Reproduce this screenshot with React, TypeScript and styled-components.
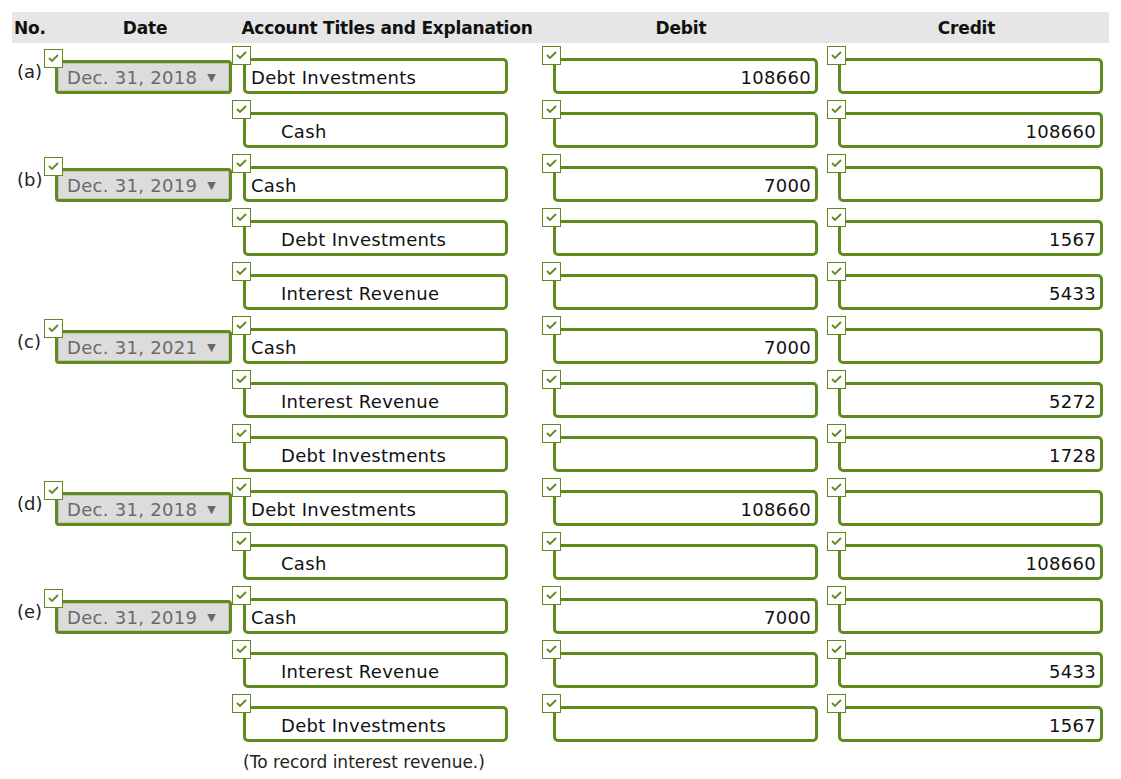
import React from "react";
import styled, { createGlobalStyle } from "styled-components";

const GREEN = "#5e8b1b";

const Global = createGlobalStyle`
  html, body { margin: 0; padding: 0; background: #fff; }
  body { font-family: "DejaVu Sans", Verdana, sans-serif; color: #111; }
`;

const Page = styled.div`
  padding: 12px 12px 0 12px;
  width: 1097px;
`;

const COLS = "32px 188px 310px 285px 282px";

const Header = styled.div`
  display: grid;
  grid-template-columns: ${COLS};
  background: #e6e6e6;
  height: 31px;
  align-items: center;
  font-weight: bold;
  font-size: 17px;
  letter-spacing: -0.2px;
`;

const HeadCell = styled.div<{ $align?: string; $pl?: number; $pr?: number }>`
  text-align: ${(p) => p.$align || "center"};
  padding-left: ${(p) => p.$pl || 0}px;
  padding-right: ${(p) => p.$pr || 0}px;
  white-space: nowrap;
`;

const Body = styled.div`
  padding-top: 3px;
`;

const Row = styled.div`
  display: grid;
  grid-template-columns: ${COLS};
  height: 54px;
`;

const Label = styled.div`
  font-size: 18px;
  line-height: 22px;
  padding: 15px 0 0 5px;
  color: #222;
`;

const Field = styled.div<{ $top?: number }>`
  position: relative;
  padding: ${(p) => (p.$top ?? 12)}px 0 0 11px;
`;

const Check = styled.span<{ $top?: number }>`
  position: absolute;
  left: 0;
  top: ${(p) => p.$top ?? 0}px;
  width: 17px;
  height: 17px;
  border: 1.5px solid ${GREEN};
  background: #fff;
  z-index: 2;
  display: flex;
  align-items: flex-start;
  justify-content: center;
`;

const Input = styled.div<{ $right?: boolean; $indent?: boolean }>`
  box-sizing: border-box;
  width: 265px;
  height: 36px;
  border: 3px solid ${GREEN};
  border-radius: 5px;
  background: #fff;
  font-size: 18px;
  line-height: 34px;
  padding: 0 ${(p) => (p.$right ? 4 : 0)}px 0 ${(p) => (p.$indent ? 35 : 5)}px;
  text-align: ${(p) => (p.$right ? "right" : "left")};
  white-space: nowrap;
  letter-spacing: 0.3px;
  overflow: visible;
`;

const Select = styled.div`
  box-sizing: border-box;
  width: 177px;
  height: 34px;
  border: 3px solid ${GREEN};
  border-radius: 4px;
  background: #dcdcdc;
  box-shadow: inset 0 0 0 1px #c4c4c4;
  color: #6a6a6a;
  font-size: 18px;
  line-height: 28px;
  padding: 1px 0 0 9px;
  display: flex;
  align-items: center;
  white-space: nowrap;
  letter-spacing: 0.3px;
`;

const Arrow = styled.span`
  font-size: 11px;
  margin-left: 10px;
  color: #666;
`;

const Note = styled.div`
  padding: 4px 0 0 231px;
  font-size: 17px;
  color: #222;
`;

const Tick = () => (
  <svg width="11" height="8" viewBox="0 0 11 8" style={{ marginTop: 4 }}>
    <path d="M1 4 L4 7 L10 1" fill="none" stroke={GREEN} strokeWidth="1.8" />
  </svg>
);

type Entry = {
  label?: string;
  date?: string;
  account: string;
  indent?: boolean;
  debit?: string;
  credit?: string;
};

const rows: Entry[] = [
  { label: "(a)", date: "Dec. 31, 2018", account: "Debt Investments", debit: "108660" },
  { account: "Cash", indent: true, credit: "108660" },
  { label: "(b)", date: "Dec. 31, 2019", account: "Cash", debit: "7000" },
  { account: "Debt Investments", indent: true, credit: "1567" },
  { account: "Interest Revenue", indent: true, credit: "5433" },
  { label: "(c)", date: "Dec. 31, 2021", account: "Cash", debit: "7000" },
  { account: "Interest Revenue", indent: true, credit: "5272" },
  { account: "Debt Investments", indent: true, credit: "1728" },
  { label: "(d)", date: "Dec. 31, 2018", account: "Debt Investments", debit: "108660" },
  { account: "Cash", indent: true, credit: "108660" },
  { label: "(e)", date: "Dec. 31, 2019", account: "Cash", debit: "7000" },
  { account: "Interest Revenue", indent: true, credit: "5433" },
  { account: "Debt Investments", indent: true, credit: "1567" },
];

export default function App() {
  return (
    <Page>
      <Global />
      <Header>
        <HeadCell $align="left" $pl={2}>No.</HeadCell>
        <HeadCell $pl={14}>Date</HeadCell>
        <HeadCell>Account Titles and Explanation</HeadCell>
        <HeadCell $pr={7}>Debit</HeadCell>
        <HeadCell $pr={3}>Credit</HeadCell>
      </Header>
      <Body>
        {rows.map((r, i) => (
          <Row key={i}>
            <Label>{r.label || ""}</Label>
            <div>
              {r.date && (
                <Field $top={14}>
                  <Check $top={3}>
                    <Tick />
                  </Check>
                  <Select>
                    {r.date}
                    <Arrow>▼</Arrow>
                  </Select>
                </Field>
              )}
            </div>
            <Field>
              <Check>
                <Tick />
              </Check>
              <Input $indent={r.indent}>{r.account}</Input>
            </Field>
            <Field>
              <Check>
                <Tick />
              </Check>
              <Input $right>{r.debit || ""}</Input>
            </Field>
            <Field>
              <Check>
                <Tick />
              </Check>
              <Input $right>{r.credit || ""}</Input>
            </Field>
          </Row>
        ))}
      </Body>
      <Note>(To record interest revenue.)</Note>
    </Page>
  );
}
